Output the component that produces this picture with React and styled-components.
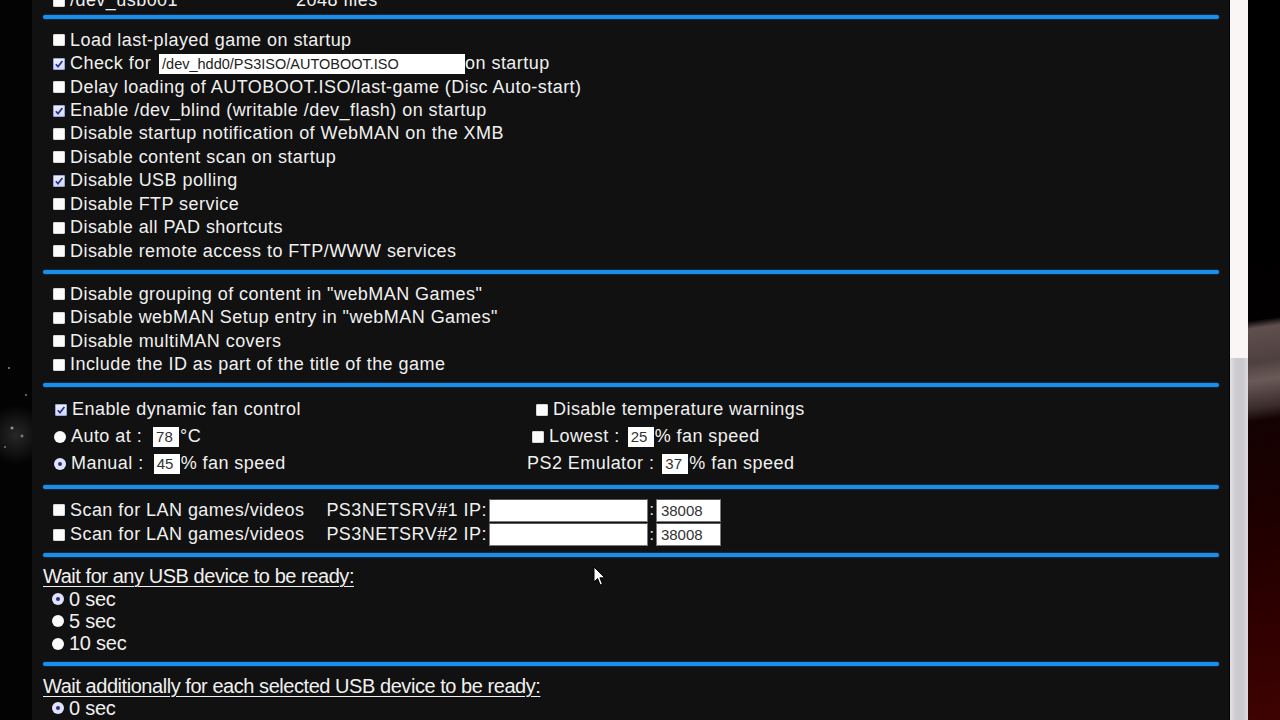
import React from "react";
import styled, { createGlobalStyle } from "styled-components";

const GlobalStyle = createGlobalStyle`
  html, body {
    margin: 0;
    padding: 0;
  }
  body {
    background: #000;
    font-family: "Liberation Sans", Arial, sans-serif;
    color: #f0f0f0;
  }
`;

const Page = styled.div`
  position: relative;
  display: flex;
  align-items: stretch;
  width: 1280px;
  height: 720px;
  overflow: hidden;
  background:
    radial-gradient(circle at 9px 368px, rgba(255,255,255,0.8) 0, rgba(255,255,255,0) 1.5px),
    radial-gradient(circle at 26px 395px, rgba(255,255,255,0.7) 0, rgba(255,255,255,0) 1.5px),
    radial-gradient(circle at 12px 428px, rgba(255,255,255,0.8) 0, rgba(255,255,255,0) 2px),
    radial-gradient(circle at 22px 436px, rgba(255,255,255,0.6) 0, rgba(255,255,255,0) 2px),
    radial-gradient(circle at 5px 447px, rgba(255,255,255,0.6) 0, rgba(255,255,255,0) 1.5px),
    radial-gradient(ellipse 30px 30px at 16px 435px, rgba(110,105,110,0.35), rgba(0,0,0,0)),
    #030303;
`;

const Gutter = styled.div`
  flex: 0 0 32px;
`;

const Panel = styled.div`
  flex: 0 0 1197px;
  margin-top: -11px;
  background: #111111;
`;

const ScrollTrack = styled.div`
  flex: 0 0 18px;
  margin-left: 1px;
  display: flex;
  flex-direction: column;
  background: #fbf6f6;
`;

const ScrollThumb = styled.div`
  flex: 1;
  margin-top: 358px;
  background: linear-gradient(to right, #e4e2e6, #cdcbd0 30%, #c9c8cc 70%, #dcdade);
`;

const Backdrop = styled.div`
  flex: 1;
  background: linear-gradient(
    172deg,
    #000 0,
    #020000 318px,
    #5f504e 326px,
    #4e403e 360px,
    #6a5b58 378px,
    #3a2c2b 405px,
    #140202 418px,
    #1f0000 520px,
    #330000 640px,
    #3f0303 720px
  );
`;

const Section = styled.div`
  padding: ${({ $pt }) => $pt}px 21px ${({ $pb }) => $pb}px 21px;
`;

const Rule = styled.div`
  height: 4px;
  margin: 0 10px 0 11px;
  border-radius: 2px;
  background: #1a8fea;
  box-shadow: 0 0 2px rgba(20, 130, 230, 0.7);
`;

const Row = styled.div`
  display: flex;
  align-items: center;
  height: ${({ $h }) => $h}px;
  padding-left: ${({ $indent = 0 }) => $indent}px;
  font-size: 18px;
  letter-spacing: 0.45px;
  white-space: nowrap;
`;

const Gap = styled.span`
  display: inline-block;
  width: ${({ $w }) => $w}px;
`;

const Box = styled.span`
  flex: 0 0 12px;
  width: 12px;
  height: 12px;
  margin-right: 5px;
  border-radius: 2px;
  background: ${({ $checked }) =>
    $checked ? "linear-gradient(#eef1ff, #cfd8f6)" : "#fbfbfb"};
  box-shadow: inset 0 0 0 1px ${({ $checked }) => ($checked ? "#9aa6d8" : "#d8d8d8")};
  display: flex;
  align-items: center;
  justify-content: center;
`;

const Radio = styled.span`
  flex: 0 0 12px;
  width: 12px;
  height: 12px;
  margin-right: 5px;
  border-radius: 50%;
  background: ${({ $checked }) => ($checked ? "#dfe3fb" : "#fafafa")};
  display: flex;
  align-items: center;
  justify-content: center;

  &::after {
    content: "";
    display: ${({ $checked }) => ($checked ? "block" : "none")};
    width: 4px;
    height: 4px;
    border-radius: 50%;
    background: #2c2f8a;
  }
`;

const PathInput = styled.span`
  display: inline-flex;
  align-items: center;
  width: 303px;
  height: 20px;
  margin-left: 8px;
  padding-left: 3px;
  background: #fff;
  color: #222;
  font-size: 14.5px;
  letter-spacing: 0;
`;

const NumInput = styled.span`
  display: inline-flex;
  align-items: center;
  width: 23px;
  height: 20px;
  margin-left: ${({ $ml = 8 }) => $ml}px;
  margin-right: 1px;
  padding-left: 3px;
  background: #fff;
  color: #333;
  font-size: 15px;
  letter-spacing: 0;
`;

const IpInput = styled.span`
  display: inline-flex;
  align-items: center;
  box-sizing: border-box;
  width: ${({ $w }) => $w}px;
  height: 23px;
  padding-left: 4px;
  background: #fff;
  color: #333;
  font-size: 15px;
  letter-spacing: 0;
  border: 1px solid #7a7a7a;
  border-top-color: #555;
`;

const Colon = styled.span`
  width: 8px;
  text-align: center;
  font-size: 16px;
`;

const FanGrid = styled.div`
  display: grid;
  grid-template-columns: 474px 1fr;
`;

const Label = styled.div`
  display: flex;
  align-items: center;
  height: 22px;
  margin-left: -10px;
  font-size: 20px;
  letter-spacing: -0.45px;
  text-decoration: underline;
  text-underline-offset: 3px;
  text-decoration-thickness: 1px;
  white-space: nowrap;
`;

const OptionRow = styled.div`
  display: flex;
  align-items: center;
  height: 22.3px;
  margin-left: -1px;
  font-size: 20px;
  letter-spacing: -0.25px;
`;

const Cursor = styled.svg`
  position: absolute;
  left: 593px;
  top: 566px;
  width: 13px;
  height: 21px;
`;

const Check = () => (
  <svg width="10" height="10" viewBox="0 0 10 10">
    <polyline points="1.8,5.2 4,7.6 8.4,2" fill="none" stroke="#2b2e9c" strokeWidth="1.7" />
  </svg>
);

const CheckRow = ({ checked, children, h = 23.45, indent }) => (
  <Row $h={h} $indent={indent}>
    <Box $checked={checked}>{checked && <Check />}</Box>
    {children}
  </Row>
);

const section1 = [
  [false, "Load last-played game on startup"],
  [true, null],
  [false, "Delay loading of AUTOBOOT.ISO/last-game (Disc Auto-start)"],
  [true, "Enable /dev_blind (writable /dev_flash) on startup"],
  [false, "Disable startup notification of WebMAN on the XMB"],
  [false, "Disable content scan on startup"],
  [true, "Disable USB polling"],
  [false, "Disable FTP service"],
  [false, "Disable all PAD shortcuts"],
  [false, "Disable remote access to FTP/WWW services"],
];

const section2 = [
  'Disable grouping of content in "webMAN Games"',
  'Disable webMAN Setup entry in "webMAN Games"',
  "Disable multiMAN covers",
  "Include the ID as part of the title of the game",
];

const App = () => {
  return (
    <>
      <GlobalStyle />
      <Page>
        <Gutter />
        <Panel>
          <Section $pt={0} $pb={3}>
            <CheckRow checked={false} h={23}>
              /dev_usb001
              <Gap $w={118} />
              2048 files
            </CheckRow>
          </Section>
          <Rule />

          <Section $pt={9.5} $pb={7}>
            {section1.map(([checked, text], i) =>
              text ? (
                <CheckRow key={i} checked={checked}>
                  {text}
                </CheckRow>
              ) : (
                <CheckRow key={i} checked={checked}>
                  Check for
                  <PathInput>/dev_hdd0/PS3ISO/AUTOBOOT.ISO</PathInput>
                  on startup
                </CheckRow>
              )
            )}
          </Section>
          <Rule />

          <Section $pt={8.5} $pb={6.5}>
            {section2.map((text, i) => (
              <CheckRow key={i} checked={false} h={23.5}>
                {text}
              </CheckRow>
            ))}
          </Section>
          <Rule />

          <Section $pt={9.5} $pb={7.5}>
            <FanGrid>
              <div>
                <CheckRow checked h={27} indent={2}>
                  Enable dynamic fan control
                </CheckRow>
                <Row $h={27} $indent={1}>
                  <Radio />
                  Auto at :<NumInput $ml={11}>78</NumInput>°C
                </Row>
                <Row $h={27} $indent={1}>
                  <Radio $checked />
                  Manual :<NumInput $ml={10}>45</NumInput>% fan speed
                </Row>
              </div>
              <div>
                <CheckRow checked={false} h={27} indent={9}>
                  Disable temperature warnings
                </CheckRow>
                <CheckRow checked={false} h={27} indent={5}>
                  Lowest :<NumInput>25</NumInput>% fan speed
                </CheckRow>
                <Row $h={27}>
                  PS2 Emulator :<NumInput $ml={8}>37</NumInput>% fan speed
                </Row>
              </div>
            </FanGrid>
          </Section>
          <Rule />

          <Section $pt={9} $pb={6}>
            {["1", "2"].map((n) => (
              <CheckRow key={n} checked={false} h={24.5}>
                Scan for LAN games/videos
                <Gap $w={22} />
                PS3NETSRV#{n} IP:
                <Gap $w={2} />
                <IpInput $w={159} />
                <Colon>:</Colon>
                <IpInput $w={65}>38008</IpInput>
              </CheckRow>
            ))}
          </Section>
          <Rule />

          <Section $pt={9} $pb={7}>
            <Label>Wait for any USB device to be ready:</Label>
            <OptionRow>
              <Radio $checked />0 sec
            </OptionRow>
            <OptionRow>
              <Radio />5 sec
            </OptionRow>
            <OptionRow>
              <Radio />10 sec
            </OptionRow>
          </Section>
          <Rule />

          <Section $pt={9.5} $pb={6}>
            <Label>Wait additionally for each selected USB device to be ready:</Label>
            <OptionRow>
              <Radio $checked />0 sec
            </OptionRow>
            <OptionRow>
              <Radio />5 sec
            </OptionRow>
            <OptionRow>
              <Radio />10 sec
            </OptionRow>
          </Section>
        </Panel>
        <ScrollTrack>
          <ScrollThumb />
        </ScrollTrack>
        <Backdrop />
        <Cursor viewBox="0 0 13 21">
          <path
            d="M1 1 L1 16 L4.6 12.6 L7.2 19 L9.4 18 L6.9 11.8 L11.8 11.8 Z"
            fill="#fff"
            stroke="#000"
            strokeWidth="1"
            strokeLinejoin="round"
          />
        </Cursor>
      </Page>
    </>
  );
};

export default App;
